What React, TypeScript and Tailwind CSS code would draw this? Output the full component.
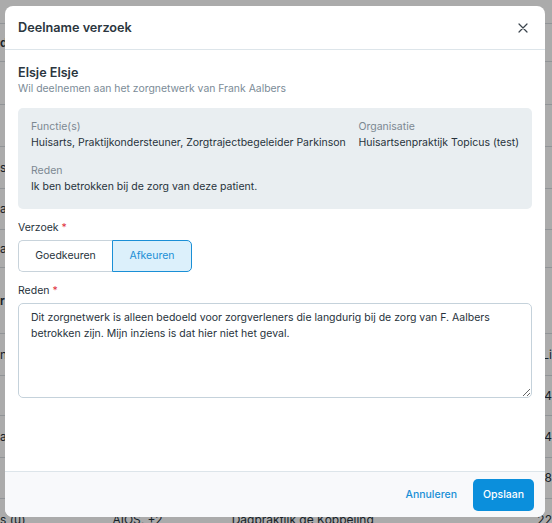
import React from 'react';

// rows of the list page that sits behind the dialog
const bgRows = [
    { h: 'h-[24px]', a: '', b: '', c: '', d: '' },
    { h: 'h-[38px]', a: 'd', b: '', c: '', d: '', bold: true },
    { h: 'h-[43px]', a: '', b: '', c: '', d: '' },
    { h: 'h-[42px]', a: '', b: '', c: '', d: '' },
    { h: 'h-[42px]', a: 's', b: '', c: '', d: '' },
    { h: 'h-[41px]', a: 'a', b: '', c: '', d: '' },
    { h: 'h-[38px]', a: 'a', b: '', c: '', d: '' },
    { h: 'h-[66px]', a: 'r', b: '', c: '', d: '', bold: true },
    { h: 'h-[42px]', a: 'n', b: '', c: '', d: 'Li' },
    { h: 'h-[40px]', a: '', b: '', c: '', d: '24' },
    { h: 'h-[42px]', a: 'ar', b: '', c: '', d: '24' },
    { h: 'h-[41px]', a: '', b: '', c: '', d: '08' },
    { h: 'h-[42px]', a: 's (u)', b: 'AIOS, +2', c: 'Dagpraktijk de Koppeling', d: '22' },
];

export default function App() {
    return (
        <div className="relative h-[523px] w-[552px] overflow-hidden bg-white text-[#27323b]"
             style={{ fontFamily: 'Inter, "Noto Sans", sans-serif' }}>
            <div className="flex flex-col text-[12px]">
                {bgRows.map((r, i) => (
                    <div key={i} className={`${r.h} flex shrink-0 items-center border-b border-[#d8dde2] ${r.bold ? 'font-semibold' : ''}`}>
                        <span className="w-[114px] whitespace-nowrap">{r.a}</span>
                        <span className="w-[121px] whitespace-nowrap">{r.b}</span>
                        <span className="w-[310px] whitespace-nowrap">{r.c}</span>
                        <span>{r.d}</span>
                    </div>
                ))}
            </div>
            <div className="absolute inset-0 bg-black/[0.33]" />

            {/* dialog */}
            <div className="absolute left-[5px] top-[6px] flex h-[511px] w-[540px] flex-col overflow-hidden rounded-[8px] bg-white">
                <div className="flex h-[44px] shrink-0 items-center justify-between border-b border-[#dde5ea] pl-[13px] pr-[17px]">
                    <h2 className="text-[12.7px] font-semibold text-[#2b3640]">Deelname verzoek</h2>
                    <svg width="10" height="10" viewBox="0 0 10 10" className="text-[#3a444d]">
                        <path d="M1 1 L9 9 M9 1 L1 9" stroke="currentColor" strokeWidth="1.2" strokeLinecap="round" />
                    </svg>
                </div>

                <div className="flex-1 px-[13px] pt-[15px]">
                    <div className="text-[12.6px] font-semibold leading-[16px] text-[#2b3640]">Elsje Elsje</div>
                    <div className="mt-[1px] text-[10.4px] leading-[14px] text-[#7b8b97]">Wil deelnemen aan het zorgnetwerk van Frank Aalbers</div>

                    <div className="mt-[12px] h-[101px] rounded-[5px] bg-[#e9eef1] px-[13px] pt-[11px] text-[10.5px] leading-[16px]">
                        <div className="flex">
                            <div className="w-[328px] whitespace-nowrap">
                                <div className="text-[#7c8891]">Functie(s)</div>
                                <div>Huisarts, Praktijkondersteuner, Zorgtrajectbegeleider Parkinson</div>
                            </div>
                            <div className="whitespace-nowrap">
                                <div className="text-[#7c8891]">Organisatie</div>
                                <div>Huisartsenpraktijk Topicus (test)</div>
                            </div>
                        </div>
                        <div className="mt-[12px] text-[#7c8891]">Reden</div>
                        <div>Ik ben betrokken bij de zorg van deze patient.</div>
                    </div>

                    <div className="mt-[12px] text-[10.5px] leading-[14px]">Verzoek <span className="text-[#e0313f]">*</span></div>
                    <div className="mt-[5px] flex h-[32px] text-[10.5px]">
                        <button className="w-[94px] rounded-l-[5px] border border-r-0 border-[#c8d3db] bg-white text-[#27323b]">Goedkeuren</button>
                        <button className="w-[80px] rounded-r-[5px] border border-[#1a8fd6] bg-[#dcf0fb] text-[#1a8fd6]">Afkeuren</button>
                    </div>

                    <div className="mt-[12px] text-[10.5px] leading-[14px]">Reden <span className="text-[#e0313f]">*</span></div>
                    <textarea
                        className="mt-[5px] block h-[95px] w-full resize-y rounded-[5px] border border-[#c5d2db] px-[12px] py-[6px] text-[10.5px] leading-[16px] text-[#27323b] outline-none"
                        defaultValue="Dit zorgnetwerk is alleen bedoeld voor zorgverleners die langdurig bij de zorg van F. Aalbers betrokken zijn. Mijn inziens is dat hier niet het geval."
                    />
                </div>

                <div className="flex h-[46px] shrink-0 items-center justify-end gap-[16px] border-t border-[#dde5ea] bg-[#f8f9fb] pr-[11px]">
                    <button className="text-[10.5px] font-medium text-[#1a8fd6]">Annuleren</button>
                    <button className="h-[32px] w-[61px] rounded-[5px] bg-[#0b8fdc] text-[10.5px] font-medium text-white">Opslaan</button>
                </div>
            </div>
        </div>
    );
}
